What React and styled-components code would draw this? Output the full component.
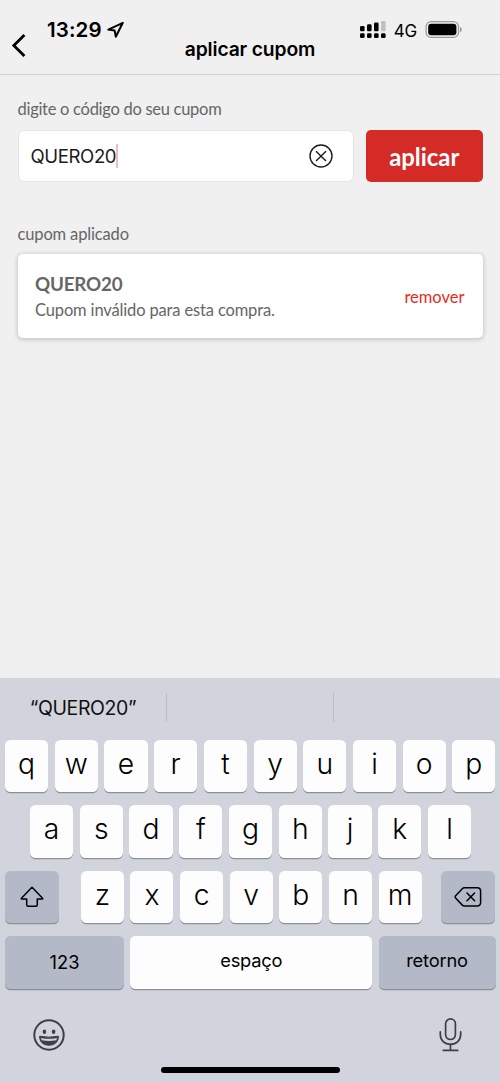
import React, { useState } from "react";
import styled, { createGlobalStyle } from "styled-components";

const GlobalStyle = createGlobalStyle`
  * {
    box-sizing: border-box;
  }
  body {
    margin: 0;
    background-color: #f0f0f0;
    font-family: Lato, sans-serif;
  }
  button {
    border: none;
    padding: 0;
    background: none;
    font-family: inherit;
  }
`

const Screen = styled.div`
  display: flex;
  flex-direction: column;
  width: 500px;
  height: 1082px;
  overflow: hidden;
  background-color: #f0f0f0;
`

const Header = styled.header`
  display: grid;
  grid-template-columns: 1fr auto 1fr;
  height: 75px;
  border-bottom: 1px solid #d0d0d0;
  font-family: Inter, sans-serif;
  color: #000;
`

const HeaderLeft = styled.div`
  display: flex;
  align-items: flex-start;
`

const BackButton = styled.button`
  margin: 33px 0 0 11px;
  width: 16px;
  height: 25px;
`

const Time = styled.span`
  margin: 18px 0 0 20px;
  font-size: 20.5px;
  font-weight: 600;
  line-height: 24px;
  letter-spacing: 0.1px;
`

const LocationIcon = styled.svg`
  margin: 21px 0 0 4px;
`

const Title = styled.h1`
  margin: 37px 0 0;
  font-size: 19.3px;
  font-weight: 600;
  line-height: 24px;
  letter-spacing: -0.15px;
`

const HeaderRight = styled.div`
  display: flex;
  justify-content: flex-end;
  align-items: flex-start;
  padding-right: 37px;
`

const SignalIcon = styled.svg`
  margin-top: 20px;
`

const Network = styled.span`
  margin: 19px 8px 0 8px;
  font-size: 17px;
  line-height: 24px;
  letter-spacing: -0.2px;
`

const BatteryIcon = styled.svg`
  margin-top: 20px;
`

const Content = styled.main`
  flex: 1;
  padding: 24px 17.5px 0 17.5px;
`

const Label = styled.p`
  margin: 0;
  font-size: 16.5px;
  line-height: 20px;
  letter-spacing: ${props => props.$spacing || "-0.15px"};
  color: #666;
`

const CouponForm = styled.div`
  display: flex;
  gap: 12px;
  margin: 10.5px 0 42.1px;
`

const InputBox = styled.div`
  display: flex;
  align-items: center;
  width: 336.5px;
  height: 52.4px;
  padding: 0 20px 0 12px;
  border: 1px solid #e4e4e4;
  border-radius: 6px;
  background-color: #fff;
`

const CouponValue = styled.span`
  font-family: Inter, sans-serif;
  font-size: 18.6px;
  letter-spacing: -0.4px;
  color: #1b1b1b;
`

const Caret = styled.span`
  width: 2px;
  height: 24px;
  background-color: #eebdc6;
`

const ClearButton = styled.button`
  margin-left: auto;
  width: 24px;
  height: 24px;
`

const ApplyButton = styled.button`
  flex: 1;
  height: 52.4px;
  padding-top: 1px;
  border-radius: 5px;
  background-color: #d52b26;
  color: #fff;
  font-size: 23.9px;
  font-weight: 700;
`

const CouponCard = styled.section`
  display: flex;
  justify-content: space-between;
  align-items: center;
  height: 83.5px;
  margin-top: 10.5px;
  padding: 0 18px 0 17.5px;
  border-radius: 5px;
  background-color: #fff;
  box-shadow: 0 1px 4px 1px rgba(0, 0, 0, 0.17);
`

const CouponName = styled.p`
  margin: 0;
  padding-top: 2px;
  font-size: 18.8px;
  font-weight: 700;
  line-height: 27px;
  letter-spacing: -0.2px;
  color: #666;
`

const CouponMessage = styled.p`
  margin: 0;
  font-size: 16.5px;
  line-height: 27px;
  letter-spacing: -0.15px;
  color: #666;
`

const RemoveButton = styled.button`
  padding-top: 1px;
  font-size: 16.5px;
  color: #e92c20;
`

const Keyboard = styled.footer`
  display: flex;
  flex-direction: column;
  height: 404px;
  background-color: #d1d4dc;
  font-family: Inter, sans-serif;
  color: #000;
`

const Suggestions = styled.div`
  display: grid;
  grid-template-columns: 167px 167px 166px;
  padding-top: 15px;
  height: 61.5px;
`

const Suggestion = styled.span`
  height: 29px;
  border-right: ${props => (props.$last ? "none" : "1px solid #b9bbc1")};
  font-size: 19.5px;
  line-height: 30px;
  letter-spacing: -0.4px;
  text-align: center;
  color: #111;
`

const KeyRow = styled.div`
  display: flex;
  gap: ${props => props.$gap || "6.6px"};
  height: 52.5px;
  margin-bottom: 13px;
  padding: ${props => props.$padding || "0 4.5px 0 5px"};
`

const Key = styled.button`
  display: flex;
  justify-content: center;
  align-items: center;
  flex: ${props => (props.$width ? "none" : 1)};
  width: ${props => props.$width || "auto"};
  margin: ${props => props.$margin || 0};
  padding-bottom: ${props => props.$lift || "0"};
  border-radius: 5.5px;
  background-color: ${props => (props.$dark ? "#b3b9c6" : "#fdfdfd")};
  box-shadow: 0 1.3px 0 #8d9096;
  color: #000;
  font-size: ${props => props.$size || "28.3px"};
  font-weight: ${props => props.$weight || 350};
  letter-spacing: ${props => props.$spacing || 0};
`

const KeyboardFooter = styled.div`
  display: flex;
  justify-content: space-between;
  padding: 16px 37px 0 32px;
`

const HomeIndicator = styled.div`
  width: 179px;
  height: 6px;
  margin: auto auto 9px;
  border-radius: 3px;
  background-color: #000;
`

const letters = (row) =>
  row.split("").map((letter) => <Key key={letter} $lift="3.6px">{letter}</Key>)

const App = () => {
  const [coupon, setCoupon] = useState("QUERO20");

  return (
    <Screen>
      <GlobalStyle />
      <Header>
        <HeaderLeft>
          <BackButton aria-label="voltar">
            <svg width="16" height="25" viewBox="0 0 16 25" fill="none" stroke="#000" strokeWidth="2.8">
              <path d="M13.4 2L2.8 12.5L13.4 23" />
            </svg>
          </BackButton>
          <Time>13:29</Time>
          <LocationIcon width="19" height="18" viewBox="0 0 19 18" fill="none" stroke="#000" strokeWidth="2" strokeLinejoin="round">
            <path d="M16.8 1.8L2.3 8.6L8.6 9.4L9.8 15.8Z" />
          </LocationIcon>
        </HeaderLeft>
        <Title>aplicar cupom</Title>
        <HeaderRight>
          <SignalIcon width="26" height="19" viewBox="0 0 26 19">
            <rect x="0" y="6" width="4.6" height="5.2" rx="1.3" />
            <rect x="7" y="4.3" width="4.6" height="6.9" rx="1.3" />
            <rect x="14" y="2.6" width="4.6" height="8.6" rx="1.3" />
            <rect x="21" y="1" width="4.6" height="10.2" rx="1.3" fill="#c0c0c0" />
            <rect x="0" y="13.3" width="4.6" height="4.7" rx="1.3" />
            <rect x="7" y="13.3" width="4.6" height="4.7" rx="1.3" />
            <rect x="14" y="13.3" width="4.6" height="4.7" rx="1.3" />
            <rect x="21" y="13.3" width="4.6" height="4.7" rx="1.3" />
          </SignalIcon>
          <Network>4G</Network>
          <BatteryIcon width="38" height="19" viewBox="0 0 38 19">
            <rect x="1.1" y="1.6" width="32.4" height="15.8" rx="5" fill="none" stroke="#999" strokeWidth="1.2" />
            <rect x="3.2" y="3.7" width="28.2" height="11.6" rx="3" />
            <path d="M35 6.7C37.3 7.6 37.3 11.4 35 12.3Z" fill="#999" />
          </BatteryIcon>
        </HeaderRight>
      </Header>

      <Content>
        <Label $spacing="-0.28px">digite o código do seu cupom</Label>
        <CouponForm>
          <InputBox>
            <CouponValue>{coupon}</CouponValue>
            <Caret />
            <ClearButton aria-label="limpar" onClick={() => setCoupon("")}>
              <svg width="24" height="24" viewBox="0 0 24 24" fill="none" stroke="#1b1b1b" strokeWidth="1.4">
                <circle cx="12" cy="12" r="11" />
                <path d="M7 7.3L17 16.9M17 7.3L7 16.9" />
              </svg>
            </ClearButton>
          </InputBox>
          <ApplyButton>aplicar</ApplyButton>
        </CouponForm>

        <Label>cupom aplicado</Label>
        <CouponCard>
          <div>
            <CouponName>QUERO20</CouponName>
            <CouponMessage>Cupom inválido para esta compra.</CouponMessage>
          </div>
          <RemoveButton>remover</RemoveButton>
        </CouponCard>
      </Content>

      <Keyboard>
        <Suggestions>
          <Suggestion>“QUERO20”</Suggestion>
          <Suggestion />
          <Suggestion $last />
        </Suggestions>
        <KeyRow>{letters("qwertyuiop")}</KeyRow>
        <KeyRow $padding="0 29px 0 30px">{letters("asdfghjkl")}</KeyRow>
        <KeyRow>
          <Key $dark $width="54px" $margin="0 15.2px 0 0" aria-label="shift">
            <svg width="24" height="22" viewBox="0 0 24 22" fill="none" stroke="#000" strokeWidth="1.5" strokeLinejoin="round">
              <path d="M12 1.3L22.6 12.2Q23 13 22.2 13H17.3V18.8Q17.3 20.3 15.8 20.3H8.2Q6.7 20.3 6.7 18.8V13H1.8Q1 13 1.4 12.2Z" />
            </svg>
          </Key>
          {letters("zxcvbnm")}
          <Key $dark $width="54px" $margin="0 0 0 13.2px" aria-label="apagar">
            <svg width="28" height="22" viewBox="0 0 28 22" fill="none" stroke="#000" strokeWidth="1.5" strokeLinejoin="round" strokeLinecap="round">
              <path d="M10.3 1.8H23.2Q26.6 1.8 26.6 5.2V16.6Q26.6 20 23.2 20H10.3Q9.2 20 8.3 19.1L1.6 12.1Q0.8 10.9 1.6 9.7L8.3 2.7Q9.2 1.8 10.3 1.8Z" />
              <path d="M13 7L20.6 14.8M20.6 7L13 14.8" />
            </svg>
          </Key>
        </KeyRow>
        <KeyRow $gap="6.2px">
          <Key $dark $width="119px" $size="18.3px" $weight="400">123</Key>
          <Key $size="18.3px" $weight="400" $lift="4px" $spacing="-0.2px">espaço</Key>
          <Key $dark $width="117px" $size="18.3px" $weight="400" $lift="4px" $spacing="-0.2px">retorno</Key>
        </KeyRow>

        <KeyboardFooter>
          <svg width="34" height="34" viewBox="0 0 34 34" fill="none" stroke="#3c3f44" strokeWidth="2">
            <circle cx="17" cy="17" r="14.7" />
            <ellipse cx="12.4" cy="13.7" rx="1.8" ry="2.2" fill="#3c3f44" stroke="none" />
            <ellipse cx="21.6" cy="13.7" rx="1.8" ry="2.2" fill="#3c3f44" stroke="none" />
            <path d="M7.6 18.2Q17 20.2 26.4 18.2C26.5 24 22.5 27.2 17 27.2S7.5 24 7.6 18.2Z" fill="#3c3f44" strokeWidth="1" />
            <path d="M9 19.9Q17 21.6 25 19.9L24.3 22.2Q17 23.8 9.7 22.2Z" fill="#d1d4dc" stroke="none" />
          </svg>
          <svg width="25" height="36" viewBox="0 0 25 36" fill="none" stroke="#3c3f44" strokeWidth="1.7" strokeLinecap="round">
            <rect x="7.6" y="0.9" width="9.8" height="20.6" rx="4.9" />
            <path d="M2.3 13.8V16.3C2.3 22.5 6.6 26.3 12.5 26.3S22.7 22.5 22.7 16.3V13.8" />
            <path d="M12.5 26.3V32.3M5.3 32.4H19.7" />
          </svg>
        </KeyboardFooter>
        <HomeIndicator />
      </Keyboard>
    </Screen>
  )
}

export default App
